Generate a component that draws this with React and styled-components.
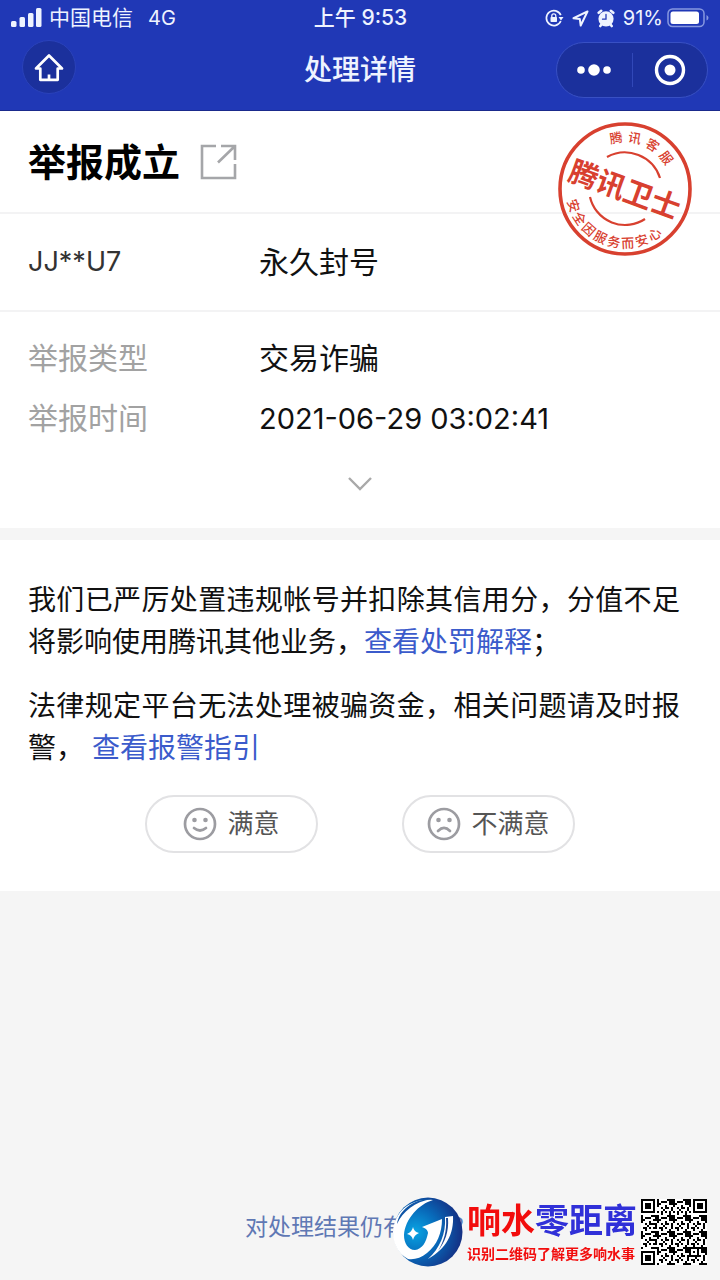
import styled, { createGlobalStyle } from 'styled-components';

const GlobalStyle = createGlobalStyle`
	* {
		box-sizing: border-box;
	}
	body {
		margin: 0;
		background: #f5f5f5;
		color: #111;
		font-family: Inter, 'Noto Sans CJK SC', sans-serif;
	}
	button {
		font-family: inherit;
		cursor: pointer;
	}
`;

const StyledPage = styled.div`
	display: flex;
	flex-direction: column;
	min-height: 100vh;
`;

const StyledHeader = styled.header`
	background: #2038b6;
	border-bottom: solid 1px #1a2a8c;
	color: #eef3ff;
`;

const StyledStatusBar = styled.div`
	display: grid;
	grid-template-columns: 1fr auto 1fr;
	align-items: center;
	height: 36px;
	padding: 0 10px 0 11px;
	font-size: 21px;
	line-height: 24px;
`;

const StyledStatusGroup = styled.div`
	display: flex;
	align-items: center;
	justify-content: ${({ $end }) => ($end ? 'flex-end' : 'flex-start')};
	gap: ${({ $gap }) => $gap}px;
`;

const StyledNetwork = styled.span`
	margin-left: 8px;
	font-size: 20px;
`;

const StyledPercent = styled.span`
	font-size: 20px;
`;

const StyledClock = styled.span`
	font-weight: 500;
`;

const StyledNav = styled.nav`
	display: grid;
	grid-template-columns: 1fr auto 1fr;
	align-items: center;
	height: 74px;
	padding: 0 12px 6px;
`;

const StyledHomeButton = styled.button`
	display: flex;
	align-items: center;
	justify-content: center;
	width: 54px;
	height: 54px;
	margin: 0 0 6px 10px;
	padding: 0;
	border: solid 1px #2a42ba;
	border-radius: 50%;
	background: #1b309c;
`;

const StyledNavTitle = styled.h1`
	margin: 0;
	font-size: 28px;
	font-weight: 500;
	line-height: 40px;
`;

const StyledCapsule = styled.div`
	display: flex;
	justify-self: end;
	align-items: center;
	width: 152px;
	height: 56px;
	border: solid 1px #3850c4;
	border-radius: 28px;
	background: #1b309c;
`;

const StyledCapsuleButton = styled.button`
	display: flex;
	flex: 1;
	align-items: center;
	justify-content: center;
	height: 34px;
	padding: 0;
	border: none;
	background: none;

	& + & {
		border-left: solid 1px #3148b8;
	}
`;

const StyledCard = styled.section`
	position: relative;
	background: white;
`;

const StyledResult = styled.div`
	display: flex;
	align-items: center;
	gap: 20px;
	height: 103px;
	padding: 0 28px;
	border-bottom: solid 2px #f3f3f4;
`;

const StyledResultTitle = styled.h2`
	margin: 0;
	font-size: 38px;
	font-weight: 700;
	line-height: 52px;
	color: #000;
`;

const StyledIconButton = styled.button`
	display: flex;
	padding: 0;
	border: none;
	background: none;
`;

const StyledSeal = styled.svg`
	position: absolute;
	top: 10px;
	right: 27px;
`;

const StyledInfoList = styled.dl`
	margin: 0;
	padding: ${({ $tall }) => ($tall ? '33px 28px' : '16px 28px 19px')};
	${({ $tall }) => $tall && 'border-bottom: solid 2px #f3f3f4;'}
`;

const StyledInfoRow = styled.div`
	display: grid;
	grid-template-columns: 231px 1fr;
	font-size: 30px;
	line-height: ${({ $tall }) => ($tall ? 30 : 60)}px;
`;

const StyledLabel = styled.dt`
	font-size: ${({ $dark }) => ($dark ? 27 : 30)}px;
	color: ${({ $dark }) => ($dark ? '#333' : '#a2a2a2')};
`;

const StyledValue = styled.dd`
	margin: 0;
`;

const StyledTime = styled.time`
	font-size: 29px;
`;

const StyledExpand = styled(StyledIconButton)`
	justify-content: center;
	width: 100%;
	padding: 8px 0 36px;
`;

const StyledNotice = styled(StyledCard)`
	margin-top: 12px;
	padding: 39px 28px 38px;
`;

const StyledParagraph = styled.p`
	margin: 0 12px 22px 0;
	font-size: 28px;
	line-height: 42px;
	text-align: justify;
`;

const StyledLink = styled.a`
	color: #3b5bcb;
	text-decoration: none;
`;

const StyledChoices = styled.div`
	display: flex;
	justify-content: center;
	gap: 84px;
	padding-top: 4px;
`;

const StyledChoice = styled.button`
	display: flex;
	align-items: center;
	justify-content: center;
	gap: 10px;
	width: 173px;
	height: 58px;
	padding: 0;
	border: solid 2px #e2e2e4;
	border-radius: 29px;
	background: white;
	color: #555;
	font-size: 26px;
	line-height: 32px;
`;

const StyledFooter = styled.footer`
	margin-top: auto;
	padding-bottom: 36px;
	text-align: center;
	font-size: 23px;
	line-height: 34px;
`;

const StyledFooterLink = styled(StyledLink)`
	color: #5f78b4;
`;

const StyledWatermark = styled.aside`
	position: fixed;
	right: 13px;
	bottom: 13px;
	display: flex;
	align-items: center;
	gap: 4px;
`;

const StyledSlogan = styled.div`
	padding-bottom: 2px;
	font-family: 'Noto Sans CJK SC', sans-serif;
	font-weight: 700;
	white-space: nowrap;
	color: #f20d0d;
`;

const StyledBrand = styled.div`
	font-size: 34px;
	line-height: 44px;
`;

const StyledBrandBlue = styled.span`
	color: #3030d8;
`;

const StyledHint = styled.div`
	font-size: 14px;
	line-height: 24px;
`;

const SignalIcon = () => (
	<svg width="31" height="20" viewBox="0 0 31 20" fill="#eef3ff">
		<rect x="0" y="13" width="5.5" height="6" rx="1.5" />
		<rect x="8.5" y="9" width="5.5" height="10" rx="1.5" />
		<rect x="17" y="5" width="5.5" height="14" rx="1.5" />
		<rect x="25" y="0" width="5.5" height="19" rx="1.5" />
	</svg>
);

const RotationLockIcon = () => (
	<svg width="19" height="18" viewBox="0 0 19 18" fill="none" stroke="#eef3ff" strokeWidth="1.7">
		<path d="M15.8 6.2A7.5 7.5 0 1 0 15.8 12" />
		<path d="M13.5 8h5l-2.5 3.5z" fill="#eef3ff" stroke="none" />
		<rect x="5.5" y="8" width="6.5" height="5" rx="0.8" fill="#eef3ff" stroke="none" />
		<path d="M6.8 8.5V6.8a2 2 0 0 1 4 0v1.7" strokeWidth="1.3" />
	</svg>
);

const LocationIcon = () => (
	<svg width="17" height="17" viewBox="0 0 17 17" fill="none" stroke="#eef3ff" strokeWidth="2" strokeLinejoin="round">
		<path d="M15.5 1.5 1.5 8.2l6.3.9.9 6.4z" />
	</svg>
);

const AlarmIcon = () => (
	<svg width="18" height="19" viewBox="0 0 18 19" fill="none" stroke="#eef3ff" strokeWidth="2.6" strokeLinecap="round">
		<circle cx="9" cy="9.8" r="7.6" fill="#eef3ff" stroke="none" />
		<path d="M1.7 3.8 4.2 1.8M16.3 3.8l-2.5-2M3.3 17l1.3-1.6M14.7 17l-1.3-1.6" />
		<path d="M9 5.5v4.7H5.5" stroke="#2038b6" strokeWidth="1.3" />
	</svg>
);

const BatteryIcon = () => (
	<svg width="43" height="20" viewBox="0 0 43 20" fill="none">
		<rect x="1" y="1" width="36" height="17.5" rx="4.5" stroke="#8798e0" strokeWidth="1.5" />
		<rect x="3.5" y="3.5" width="28.5" height="12.5" rx="2.5" fill="#fff" />
		<path d="M39.5 7v5.5q2-.8 2-2.7t-2-2.8z" fill="#8798e0" />
	</svg>
);

const HomeIcon = () => (
	<svg width="32" height="32" viewBox="0 0 32 32" fill="none" stroke="#fff" strokeWidth="2.7">
		<path d="M3 17.5 16 4.5l13 13h-4.3v11.3H7.3V17.5z" strokeLinejoin="round" />
		<path d="M16 23.5v5" />
	</svg>
);

const DotsIcon = () => (
	<svg width="34" height="14" viewBox="0 0 34 14" fill="#fff">
		<circle cx="4" cy="7" r="3.8" />
		<circle cx="17" cy="7" r="5.8" />
		<circle cx="30" cy="7" r="3.8" />
	</svg>
);

const TargetIcon = () => (
	<svg width="32" height="32" viewBox="0 0 32 32" fill="none">
		<circle cx="16" cy="16" r="13.5" stroke="#fff" strokeWidth="3.4" />
		<circle cx="16" cy="16" r="5.5" fill="#fff" />
	</svg>
);

const ShareIcon = () => (
	<svg width="37" height="36" viewBox="0 0 37 36" fill="none" stroke="#a5a6a9" strokeWidth="2.6">
		<path d="M16 2H2v32h33V20" />
		<path d="M21 2h14v14M35 2 18 18.5" />
	</svg>
);

const ChevronIcon = () => (
	<svg width="26" height="16" viewBox="0 0 26 16" fill="none" stroke="#a9a9a9" strokeWidth="2.4">
		<path d="M2 2l11 11L24 2" />
	</svg>
);

const FaceIcon = ({ mouth }) => (
	<svg width="34" height="34" viewBox="0 0 34 34" fill="none" stroke="#9c9ca1" strokeWidth="2.7">
		<circle cx="17" cy="17" r="15" />
		<circle cx="11.5" cy="13" r="2.3" fill="#9c9ca1" stroke="none" />
		<circle cx="22.5" cy="13" r="2.3" fill="#9c9ca1" stroke="none" />
		<path d={mouth} strokeLinecap="round" />
	</svg>
);

const topText = ['腾', '讯', '客', '服'];
const bottomText = ['安', '全', '因', '服', '务', '而', '安', '心'];

const Seal = () => (
	<StyledSeal width="136" height="136" viewBox="-68 -68 136 136" fill="#d8402f" textAnchor="middle">
		<circle r="65" fill="none" stroke="#d8402f" strokeWidth="3.6" />
		<g fill="none" stroke="#d8402f" strokeWidth="2.2">
			<path d="M-18-32A37 37 0 0 1 35-11" />
			<path d="M-35 8A36 36 0 0 0 20 30" />
		</g>
		<g fontSize="13" fontWeight="500">
			{topText.map((char, i) => (
				<text key={i} y="-47" transform={`rotate(${i * 21 - 10})`}>{char}</text>
			))}
			{bottomText.map((char, i) => (
				<text key={i} y="59" transform={`rotate(${72 - i * 15})`}>{char}</text>
			))}
		</g>
		<text y="11" fontSize="29" fontWeight="700" transform="rotate(20)">腾讯卫士</text>
	</StyledSeal>
);

const LogoIcon = () => (
	<svg width="70" height="70" viewBox="0 0 70 70">
		<defs>
			<radialGradient id="globe" cx="0.32" cy="0.5" r="0.7">
				<stop offset="0" stopColor="#08a5e4" />
				<stop offset="0.5" stopColor="#0868b8" />
				<stop offset="1" stopColor="#152c80" />
			</radialGradient>
		</defs>
		<circle cx="35" cy="35" r="34.5" fill="url(#globe)" />
		<path
			d="M40 3C26 7 12 22 11 38c0 8 4 15 11 15 7-1 11-7 13-17 0-3-3-5-6-6l20-8c0 14-5 26-15 34-6 5-13 7-19 6C5 57 0 46 0 35 1 15 17 1 40 3z"
			fill="#fff"
		/>
		<path d="M38 2C19 2 6 14 4 27 10 14 22 5 38 2z" fill="#0f55a6" />
		<path d="M52 20l8-1c1 18-7 33-25 43 12-11 18-25 17-42z" fill="#fff" />
		<path d="M55 21c1 14-3 24-10 33 6-10 9-20 8-33z" fill="#1a4896" />
		<path d="M20 30q1 5 6 6-5 2-6 7-1-5-6-6 5-2 6-7z" fill="#fff" />
	</svg>
);

const QR_SIZE = 33;

const isDark = (x, y) => {
	const fx = x < 8 ? x : x > QR_SIZE - 9 ? QR_SIZE - 1 - x : -1;
	const fy = y < 8 ? y : y > QR_SIZE - 9 ? QR_SIZE - 1 - y : -1;
	const inFinder = fx >= 0 && fy >= 0 && !(x > 8 && y > 8);
	if (inFinder) {
		const ring = Math.max(Math.abs(fx - 3), Math.abs(fy - 3));
		return ring !== 2 && ring < 4;
	}
	// alignment square
	const align = Math.max(Math.abs(x - 26), Math.abs(y - 26));
	if (align < 3) return align !== 1;
	// timing lines
	if (x === 6 || y === 6) return (x + y) % 2 === 0;
	return ((x * 73 + y * 151 + x * y * 37 + ((x * x * 19) ^ (y * y * 11))) >> 2) % 2 === 0;
};

const qrPath = Array.from({ length: QR_SIZE * QR_SIZE }, (_, i) => [i % QR_SIZE, Math.floor(i / QR_SIZE)])
	.filter(([x, y]) => isDark(x, y))
	.map(([x, y]) => `M${x} ${y}h1v1h-1z`)
	.join('');

const QrCode = () => (
	<svg width="66" height="66" viewBox="0 0 33 33" shapeRendering="crispEdges">
		<rect width="33" height="33" fill="#fff" />
		<path d={qrPath} />
	</svg>
);

const App = () => {
	return (
		<>
			<GlobalStyle />
			<StyledPage>
				<StyledHeader>
					<StyledStatusBar>
						<StyledStatusGroup $gap={7}>
							<SignalIcon />
							<span>中国电信</span>
							<StyledNetwork>4G</StyledNetwork>
						</StyledStatusGroup>
						<StyledClock>上午 9:53</StyledClock>
						<StyledStatusGroup $end $gap={8}>
							<RotationLockIcon />
							<LocationIcon />
							<AlarmIcon />
							<StyledStatusGroup $gap={4}>
								<StyledPercent>91%</StyledPercent>
								<BatteryIcon />
							</StyledStatusGroup>
						</StyledStatusGroup>
					</StyledStatusBar>
					<StyledNav>
						<StyledHomeButton aria-label="首页"><HomeIcon /></StyledHomeButton>
						<StyledNavTitle>处理详情</StyledNavTitle>
						<StyledCapsule>
							<StyledCapsuleButton aria-label="更多"><DotsIcon /></StyledCapsuleButton>
							<StyledCapsuleButton aria-label="关闭"><TargetIcon /></StyledCapsuleButton>
						</StyledCapsule>
					</StyledNav>
				</StyledHeader>
				<StyledCard>
					<StyledResult>
						<StyledResultTitle>举报成立</StyledResultTitle>
						<StyledIconButton aria-label="分享"><ShareIcon /></StyledIconButton>
					</StyledResult>
					<StyledInfoList $tall>
						<StyledInfoRow $tall>
							<StyledLabel $dark>JJ**U7</StyledLabel>
							<StyledValue>永久封号</StyledValue>
						</StyledInfoRow>
					</StyledInfoList>
					<StyledInfoList>
						<StyledInfoRow>
							<StyledLabel>举报类型</StyledLabel>
							<StyledValue>交易诈骗</StyledValue>
						</StyledInfoRow>
						<StyledInfoRow>
							<StyledLabel>举报时间</StyledLabel>
							<StyledValue><StyledTime>2021-06-29 03:02:41</StyledTime></StyledValue>
						</StyledInfoRow>
					</StyledInfoList>
					<StyledExpand aria-label="展开"><ChevronIcon /></StyledExpand>
					<Seal />
				</StyledCard>
				<StyledNotice>
					<StyledParagraph>
						我们已严厉处置违规帐号并扣除其信用分，分值不足将影响使用腾讯其他业务，<StyledLink href="#penalty">查看处罚解释</StyledLink>；
					</StyledParagraph>
					<StyledParagraph>
						法律规定平台无法处理被骗资金，相关问题请及时报警， <StyledLink href="#police">查看报警指引</StyledLink>
					</StyledParagraph>
					<StyledChoices>
						<StyledChoice>
							<FaceIcon mouth="M11 21q6 5 12 0" />
							满意
						</StyledChoice>
						<StyledChoice>
							<FaceIcon mouth="M11 24q6-6 12 0" />
							不满意
						</StyledChoice>
					</StyledChoices>
				</StyledNotice>
				<StyledFooter>
					<StyledFooterLink href="#appeal">对处理结果仍有疑问？</StyledFooterLink>
				</StyledFooter>
			</StyledPage>
			<StyledWatermark>
				<LogoIcon />
				<StyledSlogan>
					<StyledBrand>响水<StyledBrandBlue>零距离</StyledBrandBlue></StyledBrand>
					<StyledHint>识别二维码了解更多响水事</StyledHint>
				</StyledSlogan>
				<QrCode />
			</StyledWatermark>
		</>
	);
};

export default App;
